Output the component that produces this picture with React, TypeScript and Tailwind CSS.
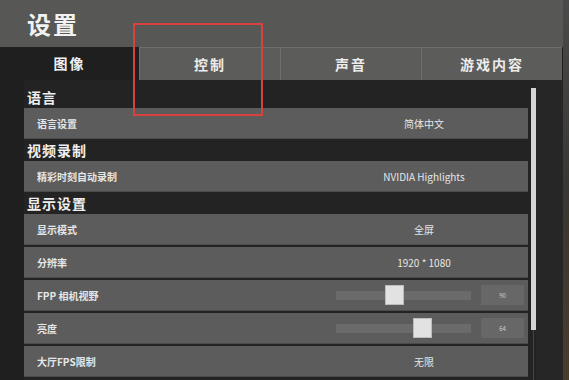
import React from 'react';

type Row = {
  label: string;
  value?: string;
  slider?: { pos: number; num: string };
};

const sections: { title: string; rows: Row[] }[] = [
  { title: '语言', rows: [{ label: '语言设置', value: '简体中文' }] },
  { title: '视频录制', rows: [{ label: '精彩时刻自动录制', value: 'NVIDIA Highlights' }] },
  {
    title: '显示设置',
    rows: [
      { label: '显示模式', value: '全屏' },
      { label: '分辨率', value: '1920 * 1080' },
      { label: 'FPP 相机视野', slider: { pos: 49, num: '90' } },
      { label: '亮度', slider: { pos: 77, num: '64' } },
      { label: '大厅FPS限制', value: '无限' },
    ],
  },
];

const tabs = ['图像', '控制', '声音', '游戏内容'];

function SettingRow({ row }: { row: Row }) {
  return (
    <div className="h-[31px] flex items-center bg-[#5c5c5c] border-b border-[#4b4b4b] text-[#e6e6e6]">
      <span className="pl-[13px] text-[10px] font-bold w-[296px]">{row.label}</span>
      {row.value && <span className="flex-1 text-center text-[10px]">{row.value}</span>}
      {row.slider && (
        <div className="flex-1 flex items-center">
          <div className="relative ml-[16px] w-[135px] h-[9px] bg-[#6b6b6b]">
            <div
              className="absolute top-[-6px] w-[19px] h-[20px] bg-[#e2e2e2] border border-[#bdbdbd]"
              style={{ left: row.slider.pos }}
            />
          </div>
          <div className="ml-[10px] w-[43px] h-[20px] bg-[#676767] flex items-center justify-center text-[6px] text-[#cfcfcf]">
            {row.slider.num}
          </div>
        </div>
      )}
    </div>
  );
}

export default function App() {
  return (
    <div
      className="relative w-[569px] h-[380px] overflow-hidden flex bg-[#232323]"
      style={{ fontFamily: '"Noto Sans CJK SC", "Noto Sans", sans-serif' }}
    >
      <div className="w-[563px] flex flex-col">
        <div className="h-[47px] bg-[#575856] flex items-center px-[27px]">
          <span className="text-[24px] font-bold text-[#f2f2f2] tracking-[2px]">设置</span>
        </div>
        <div className="h-[33px] flex bg-[#1f1f1f]">
          {tabs.map((t, i) => (
            <div
              key={t}
              className={
                i === 0
                  ? 'w-[139px] flex items-center justify-center text-[14px] font-bold text-[#f0f0f0] tracking-[2px]'
                  : 'w-[141px] flex items-center justify-center text-[14px] font-bold text-[#ececec] tracking-[2px] bg-[#5c5d5b] border-t border-l border-[#6e6f6d]'
              }
            >
              {t}
            </div>
          ))}
        </div>
        <div className="flex-1 flex">
          <div className="w-[24px] bg-[#1f1f1f]" />
          <div className="w-[504px] pt-[6px] flex flex-col">
            {sections.map((s) => (
              <div key={s.title} className="flex flex-col">
                <div className="h-[22px] flex items-center pl-[3px] text-[14px] font-bold text-[#f0f0f0] tracking-[1px]">
                  {s.title}
                </div>
                <div className="flex flex-col gap-[2px]">
                  {s.rows.map((r) => (
                    <SettingRow key={r.label} row={r} />
                  ))}
                </div>
              </div>
            ))}
          </div>
          <div className="w-[3px]" />
          <div className="w-[5px] flex flex-col items-center pt-[8px]">
            <div className="w-[5px] h-[242px] bg-[#d4d4d4]" />
            <div className="w-[1px] flex-1 bg-[#444]" />
          </div>
          <div className="flex-1 bg-[#262626]" />
        </div>
      </div>
      <div className="flex-1 bg-gradient-to-b from-[#4a4a4a] via-[#3a3632] to-[#4a3c2c]" />
      <div className="absolute left-[133px] top-[23px] w-[130px] h-[93px] border-2 border-[#d9413f]" />
    </div>
  );
}
